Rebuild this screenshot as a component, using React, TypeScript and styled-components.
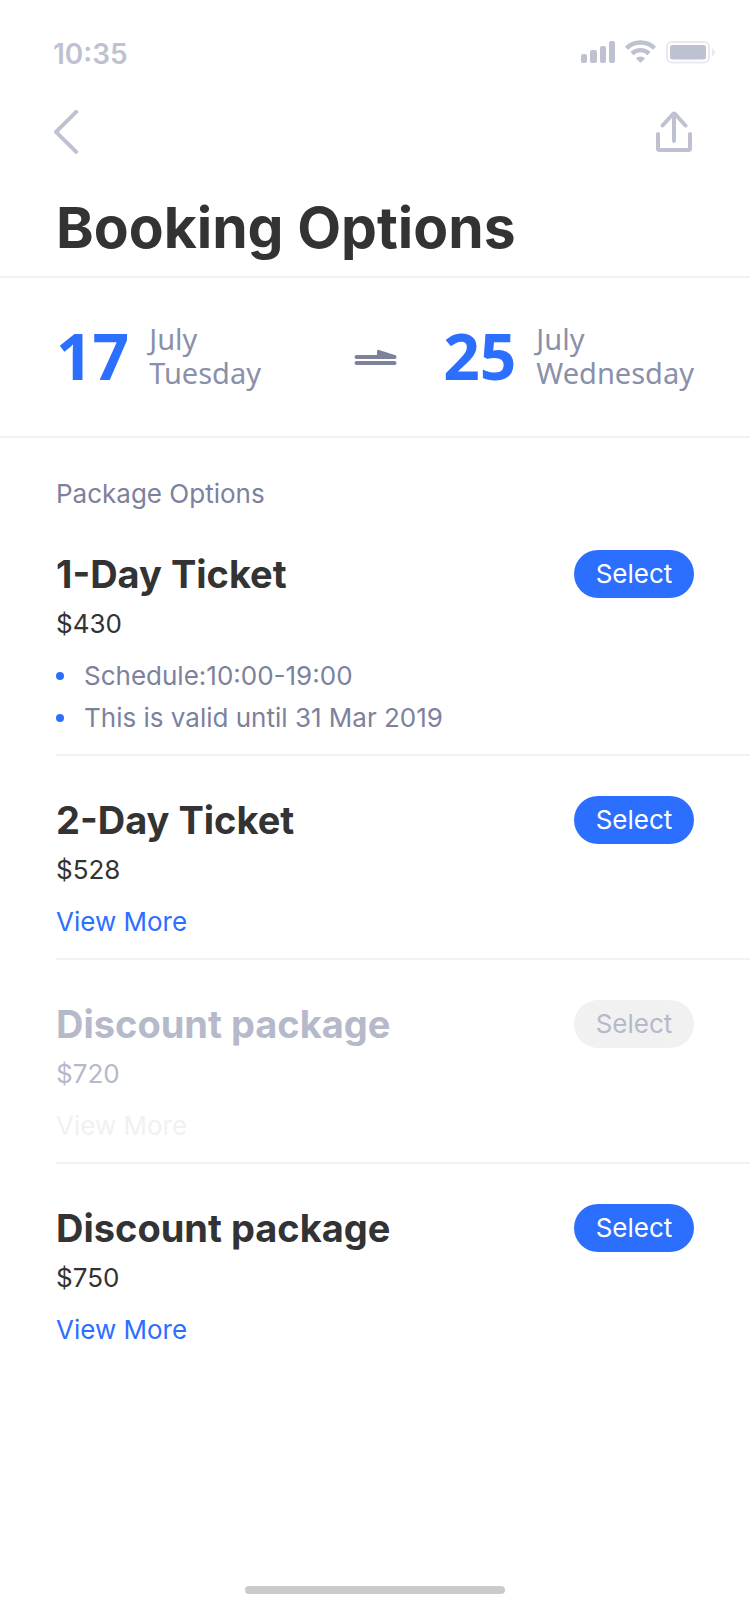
import React from 'react';
import styled, { createGlobalStyle } from 'styled-components';

const color = {
  ink: '#333333',
  slate: '#7c819d',
  mist: '#bec2d0',
  muted: '#b5b9ca',
  line: '#f1f1f1',
  brand: '#2c6fff',
};

const GlobalStyle = createGlobalStyle`
  *, *::before, *::after { box-sizing: border-box; }
  body {
    margin: 0;
    background: #ffffff;
    color: ${color.ink};
    font-family: Inter, "Liberation Sans", sans-serif;
    font-size: 26px;
  }
  h1, h2, h3, p, ul { margin: 0; padding: 0; }
`;

const Page = styled.div`
  display: flex;
  flex-direction: column;
  min-height: 100vh;
`;

const StatusBar = styled.div`
  display: flex;
  justify-content: space-between;
  padding: 32px 34px 0 53px;
  color: ${color.mist};
`;

const Clock = styled.time`
  font-size: 28px;
  font-weight: 600;
  line-height: 44px;
`;

const NavBar = styled.nav`
  display: flex;
  align-items: center;
  justify-content: space-between;
  height: 112px;
  padding: 0 56px 0 52px;
`;

const IconButton = styled.button`
  display: flex;
  padding: 0;
  border: 0;
  background: none;
  color: ${color.mist};
  cursor: pointer;
`;

const PageTitle = styled.h1`
  padding: 0 56px 8px;
  border-bottom: 2px solid ${color.line};
  font-size: 57px;
  font-weight: 700;
  line-height: 80px;
`;

const Trip = styled.section`
  display: grid;
  grid-template-columns: 1fr auto 1fr;
  align-items: center;
  height: 160px;
  padding: 0 56px 2px;
  border-bottom: 2px solid ${color.line};
  font-family: "Noto Sans", "Open Sans", sans-serif;
`;

const TripDate = styled.div<{ $end?: boolean }>`
  display: flex;
  align-items: center;
  justify-content: ${(p) => (p.$end ? 'flex-end' : 'flex-start')};
  gap: 20px;
`;

const DayNumber = styled.span`
  color: ${color.brand};
  font-size: 64px;
  font-weight: 700;
  line-height: 80px;
`;

const DayText = styled.span`
  display: flex;
  flex-direction: column;
  color: #8b90aa;
  font-size: 29px;
  line-height: 34px;
`;

const Packages = styled.main`
  padding: 40px 0 0 56px;
`;

const SectionLabel = styled.h2`
  color: ${color.slate};
  font-size: 26px;
  font-weight: 400;
  line-height: 32px;
`;

const PackageList = styled.ul`
  list-style: none;
`;

const PackageItem = styled.li<{ $disabled?: boolean }>`
  padding: 40px 56px 15px 0;
  color: ${(p) => (p.$disabled ? color.muted : color.ink)};

  & + & {
    border-top: 2px solid ${color.line};
  }
`;

const PackageHead = styled.div`
  display: flex;
  align-items: center;
  justify-content: space-between;
`;

const PackageName = styled.h3`
  font-size: 38px;
  font-weight: 700;
  line-height: 48px;
`;

const SelectButton = styled.button`
  width: 120px;
  height: 48px;
  padding: 0;
  border: 0;
  border-radius: 24px;
  background: ${color.brand};
  color: #ffffff;
  font: inherit;
  line-height: 48px;
  cursor: pointer;

  &:disabled {
    background: ${color.line};
    color: ${color.muted};
    cursor: default;
  }
`;

const Price = styled.p`
  margin-bottom: 5px;
  line-height: 52px;
`;

const Details = styled.ul`
  color: ${color.slate};
  line-height: 42px;
  list-style: none;
`;

const Detail = styled.li`
  display: flex;
  align-items: center;
  gap: 20px;

  &::before {
    content: '';
    width: 8px;
    height: 8px;
    border-radius: 50%;
    background: ${color.brand};
  }
`;

const MoreLink = styled.a<{ $disabled?: boolean }>`
  display: inline-block;
  color: ${(p) => (p.$disabled ? color.line : color.brand)};
  line-height: 42px;
  text-decoration: none;
  vertical-align: top;
`;

const HomeBar = styled.div`
  width: 260px;
  height: 8px;
  margin: auto auto 30px;
  border-radius: 4px;
  background: #cacaca;
`;

const StatusIcons = () => (
  <svg width="136" height="44" viewBox="0 0 136 44" fill="currentColor" aria-hidden="true">
    <rect x="1" y="22" width="6" height="9" rx="2" />
    <rect x="10" y="18" width="7" height="13" rx="2" />
    <rect x="20" y="14" width="6" height="17" rx="2" />
    <rect x="29" y="9" width="6" height="22" rx="2" />
    <g fill="none" stroke="currentColor" strokeWidth="4.4">
      <path d="M46.5 16.2a20 20 0 0 1 28 0" />
      <path d="M52 21.6a12.2 12.2 0 0 1 17 0" />
    </g>
    <path d="M55.8 26.2a7 7 0 0 1 9.4 0L60.5 31z" />
    <rect x="87" y="10" width="42" height="20.5" rx="5" fill="none" stroke="currentColor" strokeWidth="2" opacity="0.35" />
    <rect x="90" y="13" width="36" height="14.5" rx="2.5" />
    <path d="M132 16.2c4 1.6 4 6.4 0 8z" opacity="0.35" />
  </svg>
);

const BackIcon = () => (
  <svg width="28" height="46" viewBox="0 0 28 46" fill="none" stroke="currentColor" strokeWidth="4" strokeLinecap="round" strokeLinejoin="round" aria-hidden="true">
    <path d="M24.200 2.800 4 22.800l20.200 20" />
  </svg>
);

const ShareIcon = () => (
  <svg width="40" height="44" viewBox="0 0 40 44" fill="none" stroke="currentColor" strokeWidth="4" strokeLinecap="round" strokeLinejoin="round" aria-hidden="true">
    <path d="M4 24v14.5a1.5 1.5 0 0 0 1.5 1.5h29a1.5 1.5 0 0 0 1.5-1.5V24" />
    <path d="M20 31V4M8.500 15.500 19 4q1-1 2 0l10.500 11.500" />
  </svg>
);

const TripArrow = () => (
  <svg width="44" height="20" viewBox="0 0 44 20" aria-hidden="true">
    <path d="M3.500 11h38M3.500 17h38" fill="none" stroke={color.slate} strokeWidth="4" strokeLinecap="round" />
    <path d="M24 11V5q.3-1.500 2-1.100L42.500 9.200q1 1.800-1 3.600z" fill={color.slate} />
  </svg>
);

type Package = { name: string; price: string; details?: string[]; disabled?: boolean };

const packages: Package[] = [
  {
    name: '1-Day Ticket',
    price: '$430',
    details: ['Schedule:10:00-19:00', 'This is valid until 31 Mar 2019'],
  },
  { name: '2-Day Ticket', price: '$528' },
  { name: 'Discount package', price: '$720', disabled: true },
  { name: 'Discount package', price: '$750' },
];

const PackageRow = ({ name, price, details, disabled }: Package) => (
  <PackageItem $disabled={disabled}>
    <PackageHead>
      <PackageName>{name}</PackageName>
      <SelectButton type="button" disabled={disabled}>Select</SelectButton>
    </PackageHead>
    <Price>{price}</Price>
    {details ? (
      <Details>
        {details.map((text) => <Detail key={text}>{text}</Detail>)}
      </Details>
    ) : (
      <MoreLink href="#details" $disabled={disabled} aria-disabled={disabled}>View More</MoreLink>
    )}
  </PackageItem>
);

export default function App() {
  return (
    <Page>
      <GlobalStyle />
      <StatusBar>
        <Clock>10:35</Clock>
        <StatusIcons />
      </StatusBar>
      <NavBar>
        <IconButton type="button" aria-label="Back"><BackIcon /></IconButton>
        <IconButton type="button" aria-label="Share"><ShareIcon /></IconButton>
      </NavBar>
      <PageTitle>Booking Options</PageTitle>
      <Trip>
        <TripDate>
          <DayNumber>17</DayNumber>
          <DayText><span>July</span><span>Tuesday</span></DayText>
        </TripDate>
        <TripArrow />
        <TripDate $end>
          <DayNumber>25</DayNumber>
          <DayText><span>July</span><span>Wednesday</span></DayText>
        </TripDate>
      </Trip>
      <Packages>
        <SectionLabel>Package Options</SectionLabel>
        <PackageList>
          {packages.map((item) => <PackageRow key={item.price} {...item} />)}
        </PackageList>
      </Packages>
      <HomeBar />
    </Page>
  );
}
